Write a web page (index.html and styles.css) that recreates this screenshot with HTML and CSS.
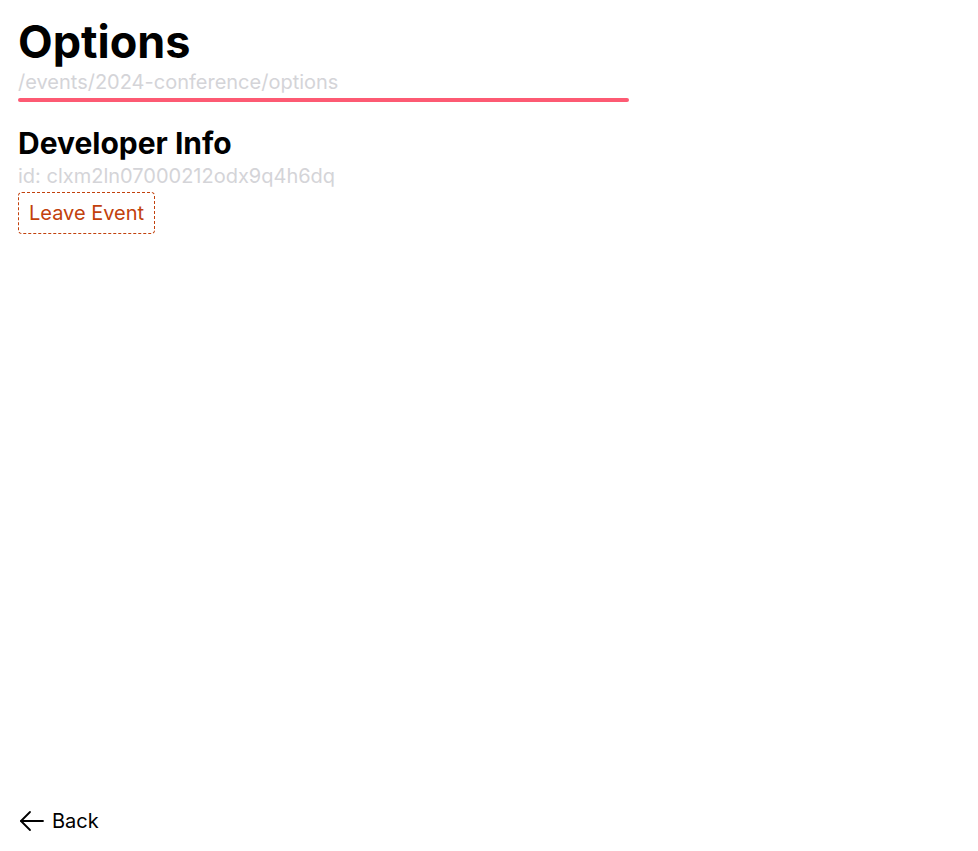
FILE: index.html
```html
<!DOCTYPE html>
<html lang="en">
  <head>
    <meta charset="utf-8" />
    <meta name="viewport" content="width=device-width, initial-scale=1.0" />
    <title>Options</title>
    <link rel="stylesheet" href="styles.css">
  </head>
  <body>
    <main class="page">
      <header class="page-header">
        <h1 class="page-title">Options</h1>
        <div class="page-path">/events/2024-conference/options</div>
        <div class="page-bar"></div>
      </header>

      <section class="dev-info">
        <h2 class="section-title">Developer Info</h2>
        <div class="dev-id">id: clxm2ln07000212odx9q4h6dq</div>
        <button class="leave-button">Leave Event</button>
      </section>

      <footer class="page-footer">
        <a class="back-link" href="#">
          <svg class="back-icon" width="26" height="24" viewBox="0 0 26 24" fill="none" stroke="currentColor" stroke-width="1.8" stroke-linecap="round" stroke-linejoin="round">
            <path d="M25 12H3" />
            <path d="M12 3l-9 9 9 9" />
          </svg>
          <span>Back</span>
        </a>
      </footer>
    </main>
  </body>
</html>
```

FILE: styles.css
```css
:root {
  --text-color: #000000;
  --muted-color: #d4d4d8;
  --accent-color: #fd5a73;
  --danger-color: #c2410c;
}

body {
  margin: 0;
  font-family: "Inter", sans-serif;
  color: var(--text-color);
  background-color: #ffffff;
}

.page {
  min-height: 100vh;
  box-sizing: border-box;
  padding: 14px 18px 14px;
  display: flex;
  flex-direction: column;
}

.page-title {
  font-size: 45px;
  font-weight: 700;
  line-height: 56px;
  margin: 0;
}

.page-path {
  font-size: 20px;
  line-height: 24px;
  color: var(--muted-color);
}

.page-bar {
  width: 611px;
  height: 4px;
  margin-top: 4px;
  border-radius: 2px;
  background-color: var(--accent-color);
}

.dev-info {
  margin-top: 23px;
}

.section-title {
  font-size: 30px;
  font-weight: 700;
  line-height: 36px;
  margin: 0;
}

.dev-id {
  font-size: 20px;
  line-height: 28px;
  margin-top: 1px;
  color: var(--muted-color);
}

.leave-button {
  margin-top: 2px;
  padding: 6px 10px;
  font-family: inherit;
  font-size: 20px;
  line-height: 28px;
  color: var(--danger-color);
  background: none;
  border: 1px dashed var(--danger-color);
  border-radius: 4px;
  cursor: pointer;
}

.page-footer {
  margin-top: auto;
}

.back-link {
  display: inline-flex;
  align-items: center;
  gap: 8px;
  font-size: 20px;
  line-height: 28px;
  color: var(--text-color);
  text-decoration: none;
}
```
